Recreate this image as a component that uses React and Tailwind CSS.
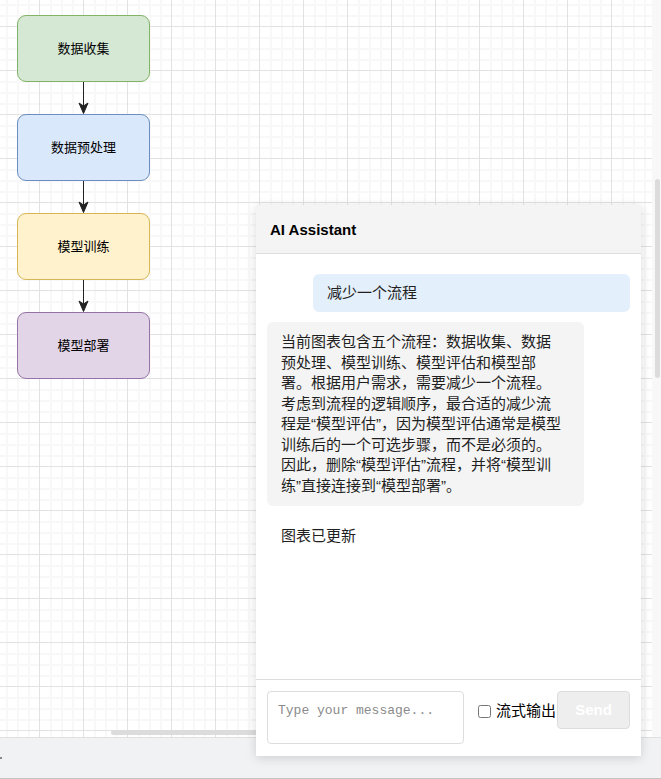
import React from "react";

const nodes = [
  { label: "数据收集", cls: "bg-[#d5e8d4] border-[#82b366]" },
  { label: "数据预处理", cls: "bg-[#dae8fc] border-[#6c8ebf]" },
  { label: "模型训练", cls: "bg-[#fff2cc] border-[#d6b656]" },
  { label: "模型部署", cls: "bg-[#e1d5e7] border-[#9673a6]" },
];

const answer =
  "当前图表包含五个流程：数据收集、数据预处理、模型训练、模型评估和模型部署。根据用户需求，需要减少一个流程。考虑到流程的逻辑顺序，最合适的减少流程是“模型评估”，因为模型评估通常是模型训练后的一个可选步骤，而不是必须的。因此，删除“模型评估”流程，并将“模型训练”直接连接到“模型部署”。";

function GridBackground() {
  return (
    <svg className="absolute inset-0 w-full h-full" xmlns="http://www.w3.org/2000/svg">
      <defs>
        <pattern id="grid" x="39" y="26" width="44" height="44" patternUnits="userSpaceOnUse">
          <rect x="11" y="0" width="2" height="44" fill="#f8f8f8" />
          <rect x="22" y="0" width="2" height="44" fill="#f8f8f8" />
          <rect x="33" y="0" width="2" height="44" fill="#f8f8f8" />
          <rect x="0" y="11" width="44" height="2" fill="#f8f8f8" />
          <rect x="0" y="22" width="44" height="2" fill="#f8f8f8" />
          <rect x="0" y="33" width="44" height="2" fill="#f8f8f8" />
          <rect x="0" y="0" width="1" height="44" fill="#e2e2e2" />
          <rect x="0" y="0" width="44" height="1" fill="#e2e2e2" />
        </pattern>
      </defs>
      <rect width="100%" height="100%" fill="#ffffff" />
      <rect width="100%" height="100%" fill="url(#grid)" />
    </svg>
  );
}

function Arrow() {
  return (
    <svg width="133" height="32" viewBox="0 0 133 32" className="block">
      <line x1="66.5" y1="0" x2="66.5" y2="24" stroke="#222" strokeWidth="1" />
      <polygon points="62,21 66.5,24 71,21 66.5,31.5" fill="#222" stroke="#222" strokeWidth="1" />
    </svg>
  );
}

export default function App() {
  return (
    <div className="relative w-[661px] h-[779px] overflow-hidden bg-white font-['Liberation_Sans','Noto_Sans_CJK_SC',sans-serif]">
      {/* canvas + vertical scrollbar */}
      <div className="flex h-[737px]">
        <div className="relative w-[652px] h-full overflow-hidden">
          <GridBackground />
          <div className="relative flex flex-col pt-[15px] pl-[17px]">
            {nodes.map((n, i) => (
              <div key={n.label} className="flex flex-col">
                <div
                  className={`w-[133px] h-[67px] rounded-[9px] border flex items-center justify-center text-[13px] text-black ${n.cls}`}
                >
                  {n.label}
                </div>
                {i < nodes.length - 1 && <Arrow />}
              </div>
            ))}
          </div>
          <div className="absolute left-[111px] top-[730px] w-[320px] h-[5px] rounded-full bg-[#dcdcdc]" />
        </div>
        <div className="w-[9px] h-full bg-[#f8f8f8]">
          <div className="ml-[3px] mt-[179px] w-[5px] h-[199px] rounded-full bg-[#dcdcdc]" />
        </div>
      </div>

      {/* bottom bar */}
      <div className="h-[42px] bg-[#f1f2f4] border-t border-b border-t-[#e0e0e0] border-b-[#c4c4c4] flex items-center">
        <div className="w-[2px] h-[2px] bg-[#888]" />
      </div>

      {/* chat panel */}
      <div className="absolute left-[256px] top-[205px] w-[385px] h-[551px] bg-white flex flex-col shadow-[0_2px_10px_rgba(0,0,0,0.15)]">
        <div className="h-[49px] shrink-0 bg-[#f4f4f4] border-b border-[#dddddd] flex items-center px-[14px] pt-[3px]">
          <span className="text-[15px] font-bold text-black">AI Assistant</span>
        </div>

        <div className="flex-1 flex flex-col pt-[20px] px-[11px] text-[15px] text-[#1f1f1f]">
          <div className="self-end w-[317px] rounded-[6px] bg-[#e3f0fb] px-[14px] py-[9px] leading-[20px]">
            减少一个流程
          </div>
          <div className="mt-[10px] w-[317px] rounded-[6px] bg-[#f4f4f4] pl-[14px] pr-[21px] py-[10px] leading-[20.5px]">
            {answer}
          </div>
          <div className="mt-[10px] w-[317px] pl-[14px] pr-[21px] py-[10px] leading-[20.5px]">
            图表已更新
          </div>
        </div>

        <div className="h-[77px] shrink-0 border-t border-[#dddddd] flex items-start pt-[11px] px-[11px]">
          <textarea
            className="w-[197px] h-[53px] resize-none rounded-[4px] border border-[#dddddd] p-[10px] leading-[18px] text-[13px] font-['Liberation_Mono',monospace] placeholder:text-[#8a8a8a] outline-none"
            placeholder="Type your message..."
          />
          <label className="ml-[14px] mt-[9px] flex items-center gap-[5px] text-[15px] text-black">
            <input type="checkbox" className="m-0 w-[13px] h-[13px]" />
            流式输出
          </label>
          <button
            type="button"
            className="ml-auto w-[73px] h-[38px] rounded-[4px] border border-[#dddddd] bg-[#eeeeee] text-white text-[15px] font-bold"
          >
            Send
          </button>
        </div>
      </div>
    </div>
  );
}
